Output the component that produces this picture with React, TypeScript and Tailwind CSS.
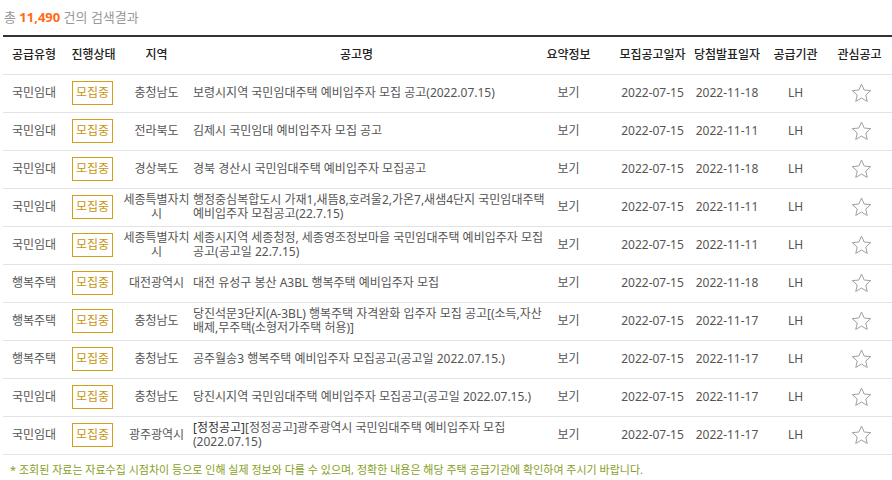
import * as React from "react";

type Row = {
  type: string;
  region: string[];
  title: React.ReactNode[];
  notice: string;
  winner: string;
};

const rows: Row[] = [
  { type: "국민임대", region: ["충청남도"], title: ["보령시지역 국민임대주택 예비입주자 모집 공고(2022.07.15)"], notice: "2022-07-15", winner: "2022-11-18" },
  { type: "국민임대", region: ["전라북도"], title: ["김제시 국민임대 예비입주자 모집 공고"], notice: "2022-07-15", winner: "2022-11-11" },
  { type: "국민임대", region: ["경상북도"], title: ["경북 경산시 국민임대주택 예비입주자 모집공고"], notice: "2022-07-15", winner: "2022-11-18" },
  {
    type: "국민임대",
    region: ["세종특별자치", "시"],
    title: ["행정중심복합도시 가재1,새뜸8,호려울2,가온7,새샘4단지 국민임대주택", "예비입주자 모집공고(22.7.15)"],
    notice: "2022-07-15",
    winner: "2022-11-11",
  },
  {
    type: "국민임대",
    region: ["세종특별자치", "시"],
    title: ["세종시지역 세종청정, 세종영조정보마을 국민임대주택 예비입주자 모집", "공고(공고일 22.7.15)"],
    notice: "2022-07-15",
    winner: "2022-11-11",
  },
  { type: "행복주택", region: ["대전광역시"], title: ["대전 유성구 봉산 A3BL 행복주택 예비입주자 모집"], notice: "2022-07-15", winner: "2022-11-18" },
  {
    type: "행복주택",
    region: ["충청남도"],
    title: ["당진석문3단지(A-3BL) 행복주택 자격완화 입주자 모집 공고[(소득,자산", "배제,무주택(소형저가주택 허용)]"],
    notice: "2022-07-15",
    winner: "2022-11-17",
  },
  { type: "행복주택", region: ["충청남도"], title: ["공주월송3 행복주택 예비입주자 모집공고(공고일 2022.07.15.)"], notice: "2022-07-15", winner: "2022-11-17" },
  { type: "국민임대", region: ["충청남도"], title: ["당진시지역 국민임대주택 예비입주자 모집공고(공고일 2022.07.15.)"], notice: "2022-07-15", winner: "2022-11-17" },
  {
    type: "국민임대",
    region: ["광주광역시"],
    title: [
      <>
        <span className="text-[#333]">[정정공고]</span>[정정공고]광주광역시 국민임대주택 예비입주자 모집
      </>,
      "(2022.07.15)",
    ],
    notice: "2022-07-15",
    winner: "2022-11-17",
  },
];

const headers = ["공급유형", "진행상태", "지역", "공고명", "요약정보", "모집공고일자", "당첨발표일자", "공급기관", "관심공고"];
const widths = ["w-[62px]", "w-[57px]", "w-[69px]", "w-[331px]", "w-[93px]", "w-[75px]", "w-[74px]", "w-[63px]", "w-[65px]"];

const StarIcon = () => (
  <svg width="21" height="20" viewBox="0 0 24 23" className="inline-block ml-[3px]">
    <polygon
      points="12,1.2 15.1,8.1 22.6,8.8 16.9,13.8 18.6,21.2 12,17.3 5.4,21.2 7.1,13.8 1.4,8.8 8.9,8.1"
      fill="none"
      stroke="#9a9a9a"
      strokeWidth="1.1"
      strokeLinejoin="miter"
    />
  </svg>
);

export default function App() {
  return (
    <div
      className="w-[892px] h-[480px] bg-white pl-[3px] text-[12px] text-[#555]"
      style={{ fontFamily: '"Noto Sans", "Noto Sans CJK KR", sans-serif' }}
    >
      <div className="h-[35px] flex items-center pl-[1px] text-[13px] text-[#999]">
        총&nbsp;<span className="font-bold text-[#ff6c12]">11,490</span>&nbsp;건의 검색결과
      </div>

      <table className="table-fixed border-collapse w-[889px]">
        <colgroup>
          {widths.map((w, i) => (
            <col key={i} className={w} />
          ))}
        </colgroup>
        <thead>
          <tr className="h-[38px] border-t-2 border-[#333] border-b border-b-[#e3e3e3]">
            {headers.map((h) => (
              <th key={h} className="p-0 font-medium text-[#222] text-center whitespace-nowrap">
                {h}
              </th>
            ))}
          </tr>
        </thead>
        <tbody>
          {rows.map((r, i) => (
            <tr key={i} className="h-[38px] border-b border-[#e3e3e3]">
              <td className="p-0 text-center">{r.type}</td>
              <td className="p-0 text-center">
                <span className="inline-flex items-center justify-center w-[41px] h-[24px] border border-[#d19f1a] text-[#c8940e] text-[12px] ml-[-2px]">
                  모집중
                </span>
              </td>
              <td className="p-0 text-center leading-[14px] whitespace-nowrap">
                {r.region.map((l, j) => (
                  <div key={j}>{l}</div>
                ))}
              </td>
              <td className="p-0 pl-[2px] text-left leading-[14px] whitespace-nowrap">
                {r.title.map((l, j) => (
                  <div key={j}>{l}</div>
                ))}
              </td>
              <td className="p-0 text-center">보기</td>
              <td className="p-0 text-center">{r.notice}</td>
              <td className="p-0 text-center">{r.winner}</td>
              <td className="p-0 text-center">LH</td>
              <td className="p-0 text-center leading-none">
                <StarIcon />
              </td>
            </tr>
          ))}
        </tbody>
      </table>

      <p className="mt-[7px] pl-[7px] text-[11px] text-[#86a01c]">
        * 조회된 자료는 자료수집 시점차이 등으로 인해 실제 정보와 다를 수 있으며, 정확한 내용은 해당 주택 공급기관에 확인하여 주시기 바랍니다.
      </p>
    </div>
  );
}
